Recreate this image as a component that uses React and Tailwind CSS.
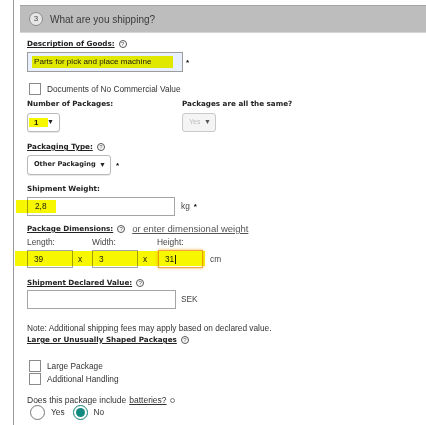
import React from 'react';

function Info() {
  return (
    <span className="ml-[4px] inline-flex h-[8px] w-[8px] items-center justify-center rounded-full border border-[#555] font-[family-name:'Liberation_Sans',Arial,sans-serif] text-[6px] font-normal leading-none text-[#555]">
      ?
    </span>
  );
}

function Label({ children, underline, info, className = '' }) {
  return (
    <div className={`flex h-[10px] items-center font-[family-name:'DejaVu_Sans',sans-serif] text-[7.2px] font-bold leading-[10px] text-[#222] ${className}`}>
      <span className={underline ? 'underline' : ''}>{children}</span>
      {info && <Info />}
    </div>
  );
}

function Checkbox({ label, className = '' }) {
  return (
    <div className={`flex h-[12px] items-center ${className}`}>
      <span className="ml-[2px] h-[12px] w-[12px] border border-[#8a8a8a] bg-white" />
      <span className="ml-[6px] text-[8.3px] text-[#333]">{label}</span>
    </div>
  );
}

function Mark({ className }) {
  return <span className={`pointer-events-none absolute bg-[#f7f700] mix-blend-multiply ${className}`} />;
}

export default function App() {
  return (
    <div className="relative h-[425px] w-[426px] overflow-hidden bg-white font-[family-name:'Liberation_Sans',Arial,sans-serif]">
      <div className="absolute left-[13px] top-0 h-full w-px bg-[#9a9a9a]" />
      <div className="pl-[20px] pt-[5px]">
        <div className="flex h-[28px] items-center border-t border-t-[#a3a3a3] border-b border-b-[#d4d4d4] bg-[#bdbdbd] pl-[9px]">
          <span className="flex h-[14px] w-[14px] items-center justify-center rounded-full border border-[#8c8c8c] bg-[#e6e6e6] text-[8px] text-[#444]">3</span>
          <span className="ml-[7px] text-[10px] text-[#3a3a3a]">What are you shipping?</span>
        </div>
      </div>

      <div className="pl-[27px]">
        <Label underline info className="mt-[6px]">Description of Goods:</Label>
        <div className="mt-[3px] flex items-center">
          <div className="relative flex h-[20px] w-[156px] items-center border border-[#9c9c9c] bg-[#e8f0fe] pl-[6px] text-[8.1px] text-[#222]">
            <Mark className="left-[4px] top-[3px] h-[12px] w-[141px]" />
            Parts for pick and place machine
          </div>
          <span className="ml-[3px] mt-[2px] text-[8px] font-bold">*</span>
        </div>

        <Checkbox label="Documents of No Commercial Value" className="mt-[11px]" />

        <div className="mt-[4px] flex">
          <div className="w-[155px]">
            <Label>Number of Packages:</Label>
            <div className="relative mt-[4px] flex h-[19px] w-[33px] items-center justify-between rounded-[3px] border border-[#b9b9b9] bg-white pl-[6px] pr-[5px] shadow-[0_1px_1px_rgba(0,0,0,0.1)]">
              <Mark className="left-[1px] top-[4px] h-[9px] w-[19px]" />
              <span className="text-[8px] font-bold text-[#222]">1</span>
              <span className="text-[7px] text-[#222]">▼</span>
            </div>
          </div>
          <div>
            <Label>Packages are all the same?</Label>
            <div className="mt-[4px] flex h-[19px] w-[34px] items-center justify-between rounded-[3px] border border-[#c9c9c9] bg-[#f4f4f4] pl-[6px] pr-[4px]">
              <span className="text-[7px] text-[#bbb]">Yes</span>
              <span className="text-[7px] text-[#555]">▼</span>
            </div>
          </div>
        </div>

        <Label underline info className="mt-[10px]">Packaging Type:</Label>
        <div className="mt-[3px] flex items-center">
          <div className="flex h-[20px] w-[84px] items-center justify-between rounded-[3px] border border-[#b9b9b9] bg-white pl-[6px] pr-[4px] shadow-[0_1px_1px_rgba(0,0,0,0.1)]">
            <span className="font-[family-name:'DejaVu_Sans',sans-serif] text-[6.6px] font-bold text-[#222]">Other Packaging</span>
            <span className="text-[7px] text-[#222]">▼</span>
          </div>
          <span className="ml-[5px] mt-[2px] text-[8px] font-bold">*</span>
        </div>

        <Label className="mt-[9px]">Shipment Weight:</Label>
        <div className="relative mt-[3px] flex items-center">
          <div className="flex h-[19px] w-[148px] items-center border border-[#a5a5a5] bg-white pl-[7px] text-[8.3px] text-[#222]">2,8</div>
          <span className="ml-[6px] text-[8.3px] text-[#444]">kg</span>
          <span className="ml-[4px] text-[8px] font-bold">*</span>
          <Mark className="left-[-11px] top-[3px] h-[13px] w-[40px]" />
        </div>

        <div className="mt-[8px] flex items-center">
          <Label underline info>Package Dimensions:</Label>
          <span className="ml-[7px] text-[9.5px] leading-[10px] text-[#555] underline">or enter dimensional weight</span>
        </div>
        <div className="mt-[3px] flex h-[10px] items-center text-[8.4px] text-[#444]">
          <span className="w-[65px]">Length:</span>
          <span className="w-[65px]">Width:</span>
          <span>Height:</span>
        </div>
        <div className="relative mt-[3px] flex items-center text-[8.3px] text-[#222]">
          <div className="flex h-[18px] w-[46px] items-center border border-[#a5a5a5] pl-[6px]">39</div>
          <span className="w-[19px] pl-[5px]">x</span>
          <div className="flex h-[18px] w-[46px] items-center border border-[#a5a5a5] pl-[6px]">3</div>
          <span className="w-[20px] pl-[5px]">x</span>
          <div className="flex h-[18px] w-[45px] items-center border border-[#f0a63a] pl-[6px] shadow-[0_0_3px_#f5b04a]">
            31<span className="ml-px h-[9px] w-px bg-[#222]" />
          </div>
          <span className="ml-[7px] text-[#444]">cm</span>
          <Mark className="left-[-12px] top-[1px] h-[15px] w-[190px]" />
        </div>

        <Label underline info className="mt-[10px]">Shipment Declared Value:</Label>
        <div className="mt-[2px] flex items-center">
          <div className="h-[19px] w-[149px] border border-[#a5a5a5] bg-white" />
          <span className="ml-[5px] text-[8.3px] text-[#444]">SEK</span>
        </div>

        <div className="mt-[14px] h-[10px] text-[8.3px] leading-[10px] text-[#333]">
          Note: Additional shipping fees may apply based on declared value.
        </div>
        <Label underline info className="mt-[2px]">Large or Unusually Shaped Packages </Label>

        <Checkbox label="Large Package" className="mt-[15px]" />
        <Checkbox label="Additional Handling" className="mt-[1px]" />

        <div className="mt-[10px] flex h-[10px] items-center text-[8.5px] text-[#333]">
          Does this package include <span className="ml-[3px] underline">batteries?</span>
          <span className="ml-[3px] h-[5px] w-[5px] rounded-full border border-[#777]" />
        </div>
        <div className="flex h-[15px] items-center text-[8.3px] text-[#333]">
          <span className="ml-[3px] h-[15px] w-[15px] rounded-full border border-[#777] bg-white" />
          <span className="ml-[6px]">Yes</span>
          <span className="ml-[8px] flex h-[15px] w-[15px] items-center justify-center rounded-full border border-[#0f7f75] bg-white">
            <span className="h-[9px] w-[9px] rounded-full bg-[#138a7f]" />
          </span>
          <span className="ml-[6px]">No</span>
        </div>
      </div>
    </div>
  );
}
